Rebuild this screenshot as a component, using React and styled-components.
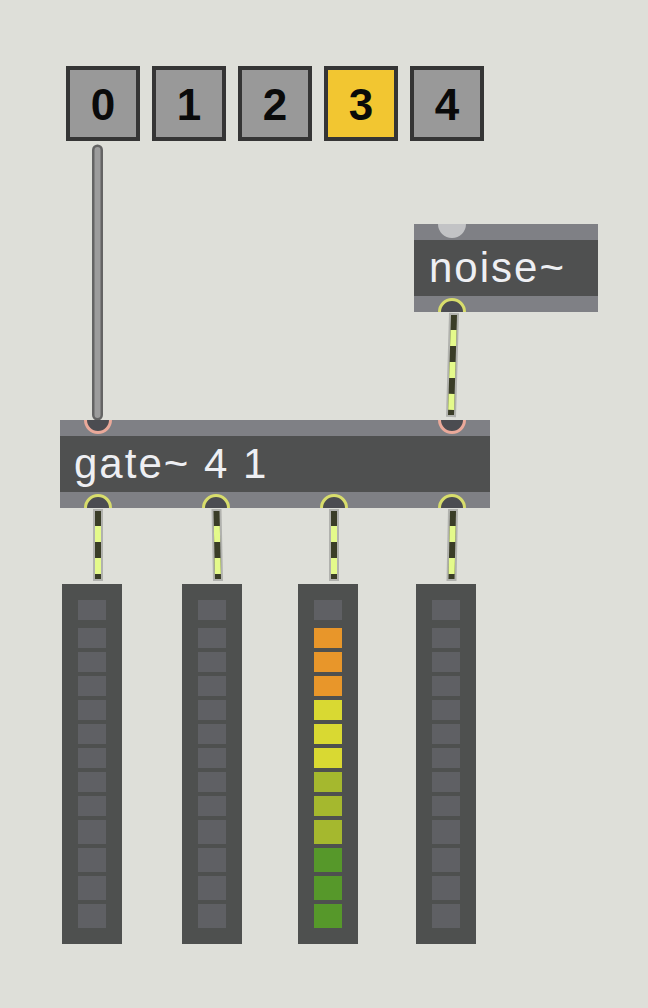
import React from 'react';
import styled, { createGlobalStyle } from 'styled-components';

const GlobalStyle = createGlobalStyle`
  html, body {
    margin: 0;
    padding: 0;
    background: #dedfd9;
  }
`;

const Patcher = styled.div`
  position: relative;
  width: 648px;
  height: 1008px;
  overflow: hidden;
  background: #dedfd9;
  font-family: 'Liberation Sans', Arial, sans-serif;
`;

const Cables = styled.svg`
  position: absolute;
  left: 0;
  top: 0;
  pointer-events: none;
`;

const Tab = styled.div`
  position: absolute;
  left: ${p => p.x}px;
  top: ${p => p.y}px;
  display: flex;
  gap: 12px;
`;

const TabButton = styled.div`
  box-sizing: border-box;
  width: 74px;
  height: 75px;
  border: 4px solid #353535;
  background: ${p => (p.active ? '#f2c631' : '#999999')};
  display: flex;
  align-items: center;
  justify-content: center;
  font-size: 44px;
  font-weight: 700;
  color: #0a0a0a;
  padding-top: 2px;
`;

const ObjectBox = styled.div`
  position: absolute;
  left: ${p => p.x}px;
  top: ${p => p.y}px;
  width: ${p => p.w}px;
  display: flex;
  flex-direction: column;
  overflow: hidden;
`;

const Band = styled.div`
  position: relative;
  height: 16px;
  background: #7f8085;
`;

const Body = styled.div`
  height: 56px;
  background: #4f5050;
  display: flex;
  align-items: center;
  padding-left: ${p => p.pad}px;
  color: #eeeff3;
  font-size: 42px;
  letter-spacing: 2px;
  line-height: 1;
  white-space: nowrap;
`;

const Port = styled.div`
  position: absolute;
  left: ${p => p.at - 14}px;
  ${p => (p.outlet ? 'bottom: -14px;' : 'top: -14px;')}
  box-sizing: border-box;
  width: 28px;
  height: 28px;
  border-radius: 50%;
  border: 3px solid ${p => p.ring};
  background: ${p => p.fill};
`;

const Meter = styled.div`
  position: absolute;
  left: ${p => p.x}px;
  top: ${p => p.y}px;
  box-sizing: border-box;
  width: 60px;
  height: 360px;
  padding: 16px;
  background: #4e504f;
  display: flex;
  flex-direction: column;
  gap: 4px;
`;

const Cell = styled.div`
  flex: none;
  height: ${p => p.h}px;
  background: ${p => p.color};
  &:first-child {
    margin-bottom: 4px;
  }
`;

const OFF = '#5f6064';
const LEVEL = [
  '#e8962a', '#e8962a', '#e8962a',
  '#d9d932', '#d9d932', '#d9d932',
  '#a5b82e', '#a5b82e', '#a5b82e',
  '#56982a', '#56982a', '#56982a',
];
const HEIGHTS = [20, 20, 20, 20, 20, 20, 20, 20, 20, 24, 24, 24, 24];

const SignalCord = ({ x1, y1, x2, y2 }) => (
  <g>
    <line x1={x1} y1={y1 - 2} x2={x2} y2={y2 + 2} stroke="#b1b2ae" strokeWidth="10" />
    <line x1={x1} y1={y1} x2={x2} y2={y2} stroke="#3a3d27" strokeWidth="6" />
    <line
      x1={x1}
      y1={y1}
      x2={x2}
      y2={y2}
      stroke="#e4fa8b"
      strokeWidth="6"
      strokeDasharray="16 16"
      strokeDashoffset="-15"
    />
  </g>
);

const Level = ({ x, lit }) => (
  <Meter x={x} y={584}>
    {HEIGHTS.map((h, i) => (
      <Cell key={i} h={h} color={lit && i > 0 ? LEVEL[i - 1] : OFF} />
    ))}
  </Meter>
);

export default function App() {
  return (
    <Patcher>
      <GlobalStyle />
      <Cables width="648" height="1008">
        <line x1="97.5" y1="150" x2="97.5" y2="415" stroke="#646464" strokeWidth="11" strokeLinecap="round" />
        <line x1="97.5" y1="150" x2="97.5" y2="415" stroke="#9c9c9c" strokeWidth="6" strokeLinecap="round" />
        <SignalCord x1={454} y1={315} x2={451} y2={415} />
        <SignalCord x1={98} y1={511} x2={98} y2={579} />
        <SignalCord x1={216.5} y1={511} x2={218} y2={579} />
        <SignalCord x1={334} y1={511} x2={334} y2={579} />
        <SignalCord x1={453} y1={511} x2={451.5} y2={579} />
      </Cables>

      <Tab x={66} y={66}>
        {[0, 1, 2, 3, 4].map(n => (
          <TabButton key={n} active={n === 3}>
            {n}
          </TabButton>
        ))}
      </Tab>

      <ObjectBox x={414} y={224} w={184}>
        <Band>
          <Port at={38} ring="#c2c3c5" fill="#c2c3c5" />
        </Band>
        <Body pad={15}>noise~</Body>
        <Band>
          <Port at={38} outlet ring="#d8dd6c" fill="#4b4c51" />
        </Band>
      </ObjectBox>

      <ObjectBox x={60} y={420} w={430}>
        <Band>
          <Port at={38} ring="#eaa99a" fill="#4b4c51" />
          <Port at={392} ring="#eaa99a" fill="#4b4c51" />
        </Band>
        <Body pad={14}>gate~ 4 1</Body>
        <Band>
          {[38, 156, 274, 392].map(at => (
            <Port key={at} at={at} outlet ring="#d8dd6c" fill="#4b4c51" />
          ))}
        </Band>
      </ObjectBox>

      <Level x={62} />
      <Level x={182} />
      <Level x={298} lit />
      <Level x={416} />
    </Patcher>
  );
}
